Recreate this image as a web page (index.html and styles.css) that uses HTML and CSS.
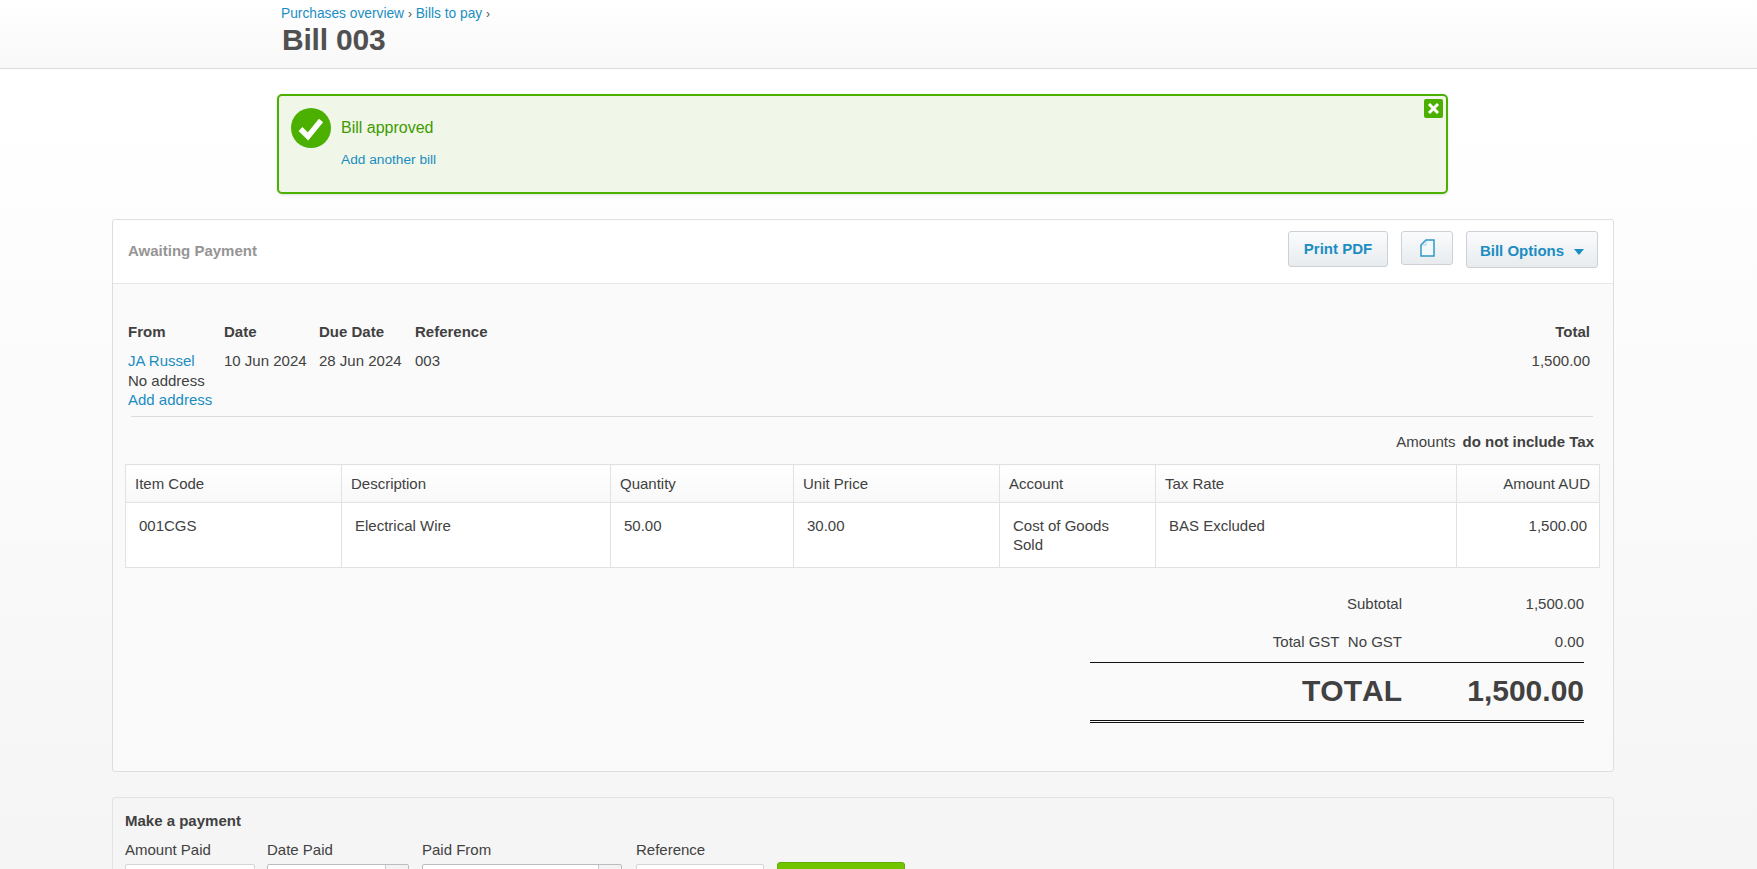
FILE: index.html
```html
<!DOCTYPE html>
<html lang="en">
<head>
<meta charset="utf-8">
<title>Bill 003</title>
<link rel="stylesheet" href="styles.css">
</head>
<body>
<header class="page-head">
  <div class="page-head-inner">
    <nav class="crumbs"><a>Purchases overview</a> <span class="sep">›</span> <a>Bills to pay</a> <span class="sep">›</span></nav>
    <h1 class="title">Bill 003</h1>
  </div>
</header>
<main class="page">
  <section class="notice">
    <svg class="notice-icon" viewBox="0 0 40 40" width="40" height="40" aria-hidden="true">
      <circle cx="20" cy="20" r="20" fill="#4bb000"/>
      <path d="M9.5 21 L17 28.5 L30 12.5" fill="none" stroke="#fff" stroke-width="5.4"/>
    </svg>
    <div class="notice-body">
      <p class="notice-title">Bill approved</p>
      <a class="notice-link">Add another bill</a>
    </div>
    <button class="notice-close" aria-label="Close">
      <svg viewBox="0 0 19 19" width="19" height="19" aria-hidden="true"><path d="M5 5 L14 14 M14 5 L5 14" stroke="#fff" stroke-width="3"/></svg>
    </button>
  </section>

  <section class="card">
    <div class="card-head">
      <span class="status">Awaiting Payment</span>
      <div class="actions">
        <button class="btn btn-print">Print PDF</button>
        <button class="btn btn-icon" aria-label="Copy">
          <svg viewBox="0 0 15 18" width="15" height="18" aria-hidden="true"><path d="M1 6 L6 1 H14 V17 H1 Z" fill="#f3f8fb" stroke="#2f98c8" stroke-width="1.5"/><path d="M2 6 H6 V2" fill="none" stroke="#a9d4e8"/></svg>
        </button>
        <button class="btn btn-options">Bill Options<span class="caret"></span></button>
      </div>
    </div>
    <div class="card-body">
      <div class="meta">
        <div class="meta-col col-from"><b>From</b><a>JA Russel</a><span>No address</span><a>Add address</a></div>
        <div class="meta-col col-date"><b>Date</b><span>10 Jun 2024</span></div>
        <div class="meta-col col-due"><b>Due Date</b><span>28 Jun 2024</span></div>
        <div class="meta-col col-ref"><b>Reference</b><span>003</span></div>
        <div class="meta-col col-total"><b>Total</b><span>1,500.00</span></div>
      </div>
      <p class="tax-note">Amounts <b>do not include Tax</b></p>
      <table class="items">
        <colgroup>
          <col class="c1"><col class="c2"><col class="c3"><col class="c4"><col class="c5"><col class="c6"><col class="c7">
        </colgroup>
        <thead>
          <tr><th>Item Code</th><th>Description</th><th>Quantity</th><th>Unit Price</th><th>Account</th><th>Tax Rate</th><th class="num">Amount AUD</th></tr>
        </thead>
        <tbody>
          <tr><td>001CGS</td><td>Electrical Wire</td><td>50.00</td><td>30.00</td><td class="acct">Cost of Goods Sold</td><td>BAS Excluded</td><td class="num">1,500.00</td></tr>
        </tbody>
      </table>
      <div class="totals">
        <div class="t-row t-sub"><span>Subtotal</span><span class="t-val">1,500.00</span></div>
        <div class="t-row t-gst"><span>Total GST&nbsp; No GST</span><span class="t-val">0.00</span></div>
        <div class="t-row t-total"><span>TOTAL</span><span class="t-val">1,500.00</span></div>
      </div>
    </div>
  </section>

  <section class="payment">
    <h2 class="pay-title">Make a payment</h2>
    <div class="pay-form">
      <label class="field f-amount">Amount Paid<span class="input"></span></label>
      <label class="field f-date">Date Paid<span class="input input-drop"></span></label>
      <label class="field f-from">Paid From<span class="input input-drop"></span></label>
      <label class="field f-ref">Reference<span class="input"></span></label>
      <button class="pay-btn" aria-label="Add Payment"></button>
    </div>
  </section>
</main>
</body>
</html>
```
FILE: styles.css
```css
* { box-sizing: border-box; }
html, body { margin: 0; height: 869px; overflow: hidden; }
body {
  font-family: "Liberation Sans", Arial, sans-serif;
  font-size: 15px;
  color: #414141;
  background: linear-gradient(#fff 0, #fff 100px, #f5f5f5 869px);
}
a { color: #1b8dc2; }
.page-head {
  height: 69px;
  background: linear-gradient(#fff, #f8f8f8);
  border-bottom: 1px solid #d9dbde;
}
.page-head-inner { padding: 6px 0 0 281px; }
.crumbs { font-size: 13.75px; line-height: 15px; color: #555; }
.sep { font-size: 12px; }
.title { margin: 1px 0 0 1px; font-size: 30px; line-height: 34px; font-weight: bold; color: #505050; letter-spacing: -0.2px; }
.page { padding: 25px 143px 0 112px; display: flex; flex-direction: column; align-items: stretch; }
.notice {
  position: relative;
  display: flex;
  align-self: flex-start;
  width: 1171px;
  height: 100px;
  margin-left: 165px;
  padding: 12px;
  gap: 10px;
  background: #f0f7e8;
  border: 2px solid #4bb000;
  border-radius: 5px;
  box-shadow: 0 1px 3px rgba(0,0,0,.12);
}
.notice-icon { flex: none; }
.notice-body { display: flex; flex-direction: column; }
.notice-title { margin: 10px 0 0; font-size: 16px; line-height: 20px; color: #3f9a00; }
.notice-link { margin-top: 13px; font-size: 13.7px; line-height: 17px; }
.notice-close {
  position: absolute;
  top: 3px;
  right: 3px;
  width: 19px;
  height: 19px;
  padding: 0;
  border: 0;
  border-radius: 2px;
  background: #4bb000;
  display: flex;
}
.card {
  margin-top: 25px;
  height: 553px;
  width: 1502px;
  background: #fafafa;
  border: 1px solid #dedede;
  border-radius: 3px;
}
.card-head {
  height: 64px;
  background: #fff;
  border-bottom: 1px solid #e6e6e6;
  border-radius: 3px 3px 0 0;
  display: flex;
  justify-content: space-between;
  padding: 11px 15px 0 15px;
}
.status { margin-top: 12px; font-size: 15px; line-height: 16px; font-weight: bold; color: #959595; }
.actions { display: flex; align-items: flex-start; }
.btn {
  font-family: inherit;
  font-size: 15px;
  font-weight: bold;
  color: #1b8dc2;
  background: linear-gradient(#fafbfc, #e8ecef);
  border: 1px solid #cdd1d5;
  border-radius: 3px;
  padding: 0;
}
.btn-print { width: 100px; height: 36px; padding-bottom: 2px; }
.btn-icon { width: 52px; height: 34px; margin-left: 13px; display: flex; align-items: center; justify-content: center; }
.btn-options { width: 132px; height: 37px; margin-left: 13px; padding-top: 1px; }
.caret {
  display: inline-block;
  margin-left: 10px;
  border: 5px solid transparent;
  border-top: 6px solid #1b8dc2;
  border-bottom: 0;
  vertical-align: 1px;
}
.card-body { padding: 0 12px; }
.meta {
  display: flex;
  margin: 38px 8px 0 6px;
  border-bottom: 1px solid #dcdcdc;
  height: 95px;
}
.meta-col { display: flex; flex-direction: column; font-size: 15px; line-height: 19.5px; }
.meta-col b { height: 29px; }
.meta-col span, .meta-col a { white-space: nowrap; }
.col-from { width: 96px; margin-left: -3px; }
.col-date { width: 95px; }
.col-due { width: 96px; }
.col-ref { flex: 1; }
.col-total { text-align: right; padding-right: 3px; }
.tax-note { margin: 16px 7px 0 0; text-align: right; font-size: 15px; line-height: 17px; }
.tax-note b { margin-left: 3px; }
.items {
  margin: 14px 0 0 0;
  width: 1474px;
  table-layout: fixed;
  border-collapse: collapse;
  background: #fff;
  font-size: 15px;
}
.c1 { width: 216px; }
.c2 { width: 269px; }
.c3 { width: 183px; }
.c4 { width: 206px; }
.c5 { width: 156px; }
.c6 { width: 301px; }
.c7 { width: 143px; }
.items th, .items td { border: 1px solid #e2e2e2; text-align: left; font-weight: normal; vertical-align: top; }
.items th { height: 38px; padding: 10px 9px 0; line-height: 17px; background: linear-gradient(#fff, #f8f8f8); }
.items td { height: 65px; padding: 13px 12px 0 13px; line-height: 19px; }
.items .acct { padding-right: 30px; }
.items .num { text-align: right; }
.totals { margin: 17px 0 0 965px; width: 494px; }
.t-row { display: flex; justify-content: flex-end; }
.t-row span:first-child { text-align: right; }
.t-val { width: 182px; text-align: right; }
.t-sub { height: 38px; line-height: 38px; }
.t-gst { height: 40px; line-height: 38px; border-bottom: 1px solid #111; }
.t-total {
  height: 60px;
  padding-top: 10px;
  font-size: 30px;
  line-height: 36px;
  font-weight: bold;
  font-kerning: none;
  border-bottom: 3px double #111;
}
.payment {
  margin-top: 25px;
  width: 1502px;
  height: 120px;
  padding: 14px 12px;
  background: #f5f5f5;
  border: 1px solid #e2e2e2;
  border-radius: 3px;
}
.pay-title { margin: 0; font-size: 15px; line-height: 17px; font-weight: bold; }
.pay-form { display: flex; align-items: flex-start; margin-top: 13px; }
.field { display: flex; flex-direction: column; font-size: 15px; line-height: 16px; }
.input {
  display: block;
  height: 30px;
  margin-top: 6px;
  background: #fff;
  border: 1px solid #d2d5d8;
  border-radius: 2px;
}
.input-drop {
  border-color: #b9bdc1;
  background: linear-gradient(to left, #f3f3f3 22px, #c4c8cc 22px, #c4c8cc 23px, #fff 23px);
}
.f-amount { width: 130px; margin-right: 12px; }
.f-date { width: 142px; margin-right: 13px; }
.f-from { width: 200px; margin-right: 14px; }
.f-ref { width: 128px; margin-right: 13px; }
.pay-btn {
  width: 128px;
  height: 36px;
  margin-top: 20px;
  background: #71c400;
  border: 1px solid #62ad00;
  border-radius: 3px;
}
```
